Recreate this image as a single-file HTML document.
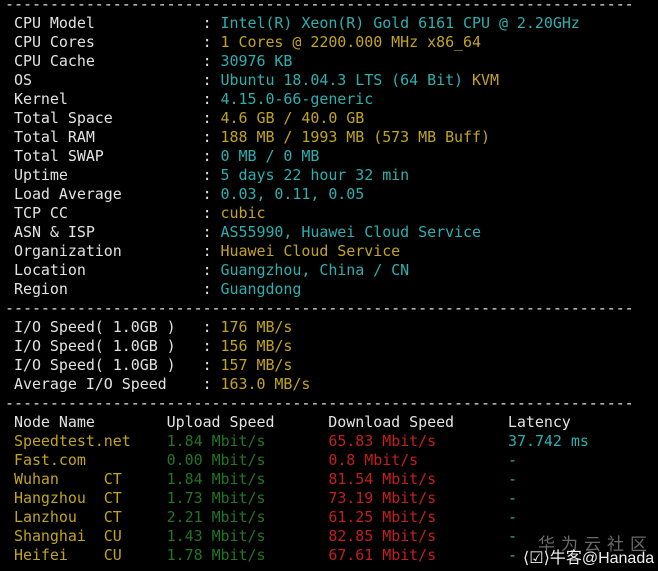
<!DOCTYPE html>
<html><head><meta charset="utf-8"><style>
html,body{margin:0;padding:0;background:#000;width:658px;height:571px;overflow:hidden}
pre{position:absolute;left:5px;top:-5px;margin:0;font-family:"DejaVu Sans Mono","Liberation Mono",monospace;font-size:15px;letter-spacing:-0.05px;line-height:19px;color:#e2e2e2;white-space:pre}
.c{color:#2ab0b0}.y{color:#c2a41e}.g{color:#227522}.r{color:#c41e1e}
.wm{position:absolute;font-family:"Liberation Sans","Noto Sans CJK SC",sans-serif;}
</style></head><body>
<pre>----------------------------------------------------------------------
 CPU Model            : <span class="c">Intel(R) Xeon(R) Gold 6161 CPU @ 2.20GHz</span>
 CPU Cores            : <span class="y">1 Cores @ 2200.000 MHz x86_64</span>
 CPU Cache            : <span class="c">30976 KB</span>
 OS                   : <span class="c">Ubuntu 18.04.3 LTS (64 Bit)</span> <span class="y">KVM</span>
 Kernel               : <span class="c">4.15.0-66-generic</span>
 Total Space          : <span class="y">4.6 GB / 40.0 GB</span>
 Total RAM            : <span class="y">188 MB / 1993 MB (573 MB Buff)</span>
 Total SWAP           : <span class="c">0 MB / 0 MB</span>
 Uptime               : <span class="c">5 days 22 hour 32 min</span>
 Load Average         : <span class="c">0.03, 0.11, 0.05</span>
 TCP CC               : <span class="y">cubic</span>
 ASN &amp; ISP            : <span class="c">AS55990, Huawei Cloud Service</span>
 Organization         : <span class="y">Huawei Cloud Service</span>
 Location             : <span class="c">Guangzhou, China / CN</span>
 Region               : <span class="c">Guangdong</span>
----------------------------------------------------------------------
 I/O Speed( 1.0GB )   : <span class="y">176 MB/s</span>
 I/O Speed( 1.0GB )   : <span class="y">156 MB/s</span>
 I/O Speed( 1.0GB )   : <span class="y">157 MB/s</span>
 Average I/O Speed    : <span class="y">163.0 MB/s</span>
----------------------------------------------------------------------
 Node Name        Upload Speed      Download Speed      Latency
 <span class="y">Speedtest.net</span>    <span class="g">1.84 Mbit/s</span>       <span class="r">65.83 Mbit/s</span>        <span class="c">37.742 ms</span>
 <span class="y">Fast.com</span>         <span class="g">0.00 Mbit/s</span>       <span class="r">0.8 Mbit/s</span>          <span class="c">-</span>
 <span class="y">Wuhan     CT</span>     <span class="g">1.84 Mbit/s</span>       <span class="r">81.54 Mbit/s</span>        <span class="c">-</span>
 <span class="y">Hangzhou  CT</span>     <span class="g">1.73 Mbit/s</span>       <span class="r">73.19 Mbit/s</span>        <span class="c">-</span>
 <span class="y">Lanzhou   CT</span>     <span class="g">2.21 Mbit/s</span>       <span class="r">61.25 Mbit/s</span>        <span class="c">-</span>
 <span class="y">Shanghai  CU</span>     <span class="g">1.43 Mbit/s</span>       <span class="r">82.85 Mbit/s</span>        <span class="c">-</span>
 <span class="y">Heifei    CU</span>     <span class="g">1.78 Mbit/s</span>       <span class="r">67.61 Mbit/s</span>        <span class="c">-</span></pre>
<div class="wm" style="left:538px;top:530px;font-size:17px;color:#6a6a6a;letter-spacing:6px">华为云社区</div>
<div class="wm" style="left:523px;top:544px;font-size:16px;color:#f0f0f0">⟨☑⟩牛客@Hanada</div>
</body></html>
